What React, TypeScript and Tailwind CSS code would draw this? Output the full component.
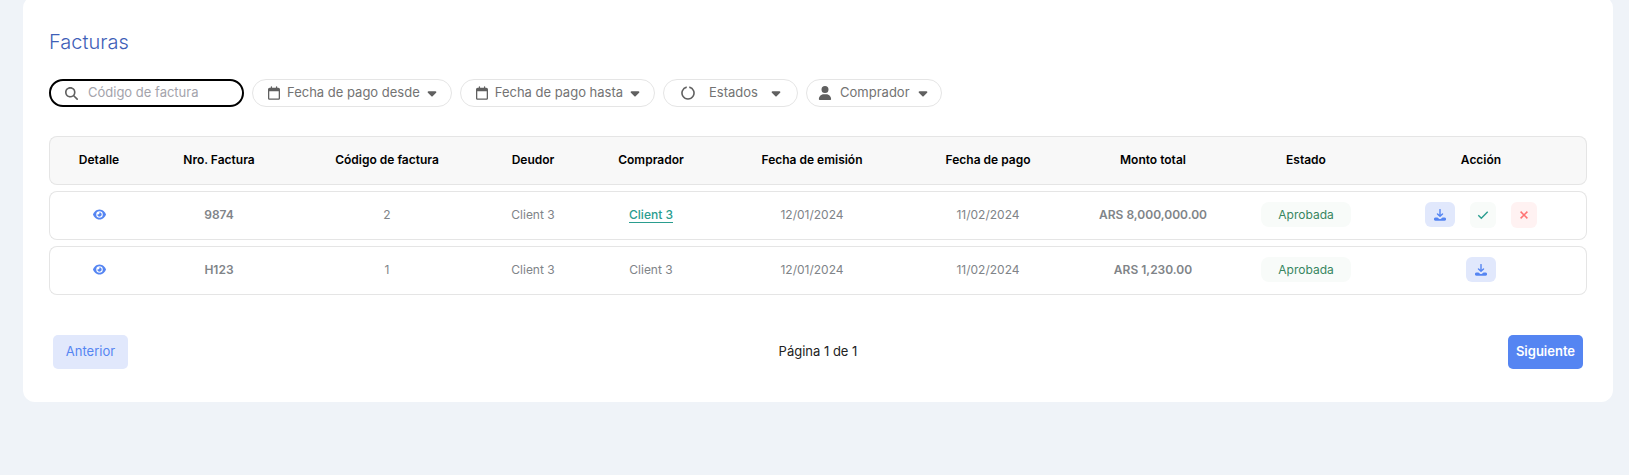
import { useState } from "react";
import { FaCaretDown, FaEye, FaMagnifyingGlass, FaRegCalendar, FaUser } from "react-icons/fa6";

type Invoice = {
  number: string;
  code: number;
  debtor: string;
  buyer: string;
  buyerIsLink?: boolean;
  issueDate: string;
  paymentDate: string;
  amount: string;
  status: string;
  canResolve?: boolean;
};

const INVOICES: Invoice[] = [
  {
    number: "9874",
    code: 2,
    debtor: "Client 3",
    buyer: "Client 3",
    buyerIsLink: true,
    issueDate: "12/01/2024",
    paymentDate: "11/02/2024",
    amount: "ARS 8,000,000.00",
    status: "Aprobada",
    canResolve: true,
  },
  {
    number: "H123",
    code: 1,
    debtor: "Client 3",
    buyer: "Client 3",
    issueDate: "12/01/2024",
    paymentDate: "11/02/2024",
    amount: "ARS 1,230.00",
    status: "Aprobada",
  },
];

const COLUMNS = [
  { label: "Detalle", width: "w-[99px]" },
  { label: "Nro. Factura", width: "w-[142px]" },
  { label: "Código de factura", width: "w-[194px]" },
  { label: "Deudor", width: "w-[98px]" },
  { label: "Comprador", width: "w-[138px]" },
  { label: "Fecha de emisión", width: "w-[184px]" },
  { label: "Fecha de pago", width: "w-[168px]" },
  { label: "Monto total", width: "w-[162px]" },
  { label: "Estado", width: "w-[144px]" },
  { label: "Acción", width: "w-[209px]" },
];

const PILL =
  "flex h-7 items-center rounded-full border border-[#e5e5e5] bg-white text-[13px] text-[#737373]";

const CELL =
  "border-y border-[#e5e5e5] p-0 pb-0.5 first:rounded-l-lg first:border-l last:rounded-r-lg last:border-r last:pr-0.5";

function DownloadIcon() {
  return (
    <svg viewBox="0 0 12 12" className="h-3 w-3" fill="none" stroke="currentColor" aria-hidden="true">
      <path d="M6 0.6v6.4M3.5 4.9 6 7.3l2.5-2.4" strokeWidth="1.4" strokeLinecap="round" strokeLinejoin="round" />
      <path
        d="M1.6 8.4h1.8l1.3 1a2 2 0 0 0 2.6 0l1.3-1h1.8a1.6 1.6 0 0 1 0 3.4H1.6a1.6 1.6 0 0 1 0-3.4z"
        fill="currentColor"
        stroke="none"
      />
    </svg>
  );
}

function CheckIcon() {
  return (
    <svg viewBox="0 0 12 12" className="h-3 w-3" fill="none" stroke="currentColor" aria-hidden="true">
      <path d="M1.3 6.3 4.3 9.2 10.7 2.8" strokeWidth="1.4" />
    </svg>
  );
}

function CrossIcon() {
  return (
    <svg viewBox="0 0 12 12" className="h-3 w-3" fill="none" stroke="currentColor" aria-hidden="true">
      <path d="M2.6 2.6l6.8 6.8M9.4 2.6 2.6 9.4" strokeWidth="1.5" />
    </svg>
  );
}

function StatusIcon() {
  return (
    <svg
      viewBox="0 0 14 14"
      className="mr-3.5 h-3.5 w-3.5 text-[#606060]"
      fill="none"
      stroke="currentColor"
      aria-hidden="true"
    >
      <path d="M5.7 1.1a6 6 0 1 0 2.6 0" strokeWidth="1.6" />
    </svg>
  );
}

function DateFilter({ label }: { label: string }) {
  return (
    <button type="button" aria-haspopup="dialog" className={`${PILL} pr-3 pl-[15px]`}>
      <FaRegCalendar className="mr-[7px] h-3.5 w-3 text-[#606060]" />
      {label}
      <FaCaretDown className="ml-[5px] h-3.5 w-3.5 text-[#606060]" />
    </button>
  );
}

function Filters() {
  const [code, setCode] = useState("");

  return (
    <div className="flex flex-wrap gap-2">
      <label className="flex h-7 w-[195px] items-center rounded-full border-2 border-black bg-white pl-3.5">
        <FaMagnifyingGlass className="mr-2.5 h-[13px] w-[13px] shrink-0 text-[#606060]" />
        <input
          type="text"
          aria-label="Código de factura"
          placeholder="Código de factura"
          value={code}
          onChange={(e) => setCode(e.target.value)}
          className="min-w-0 flex-1 bg-transparent text-[13px] text-[#737373] outline-none placeholder:text-[#a3a3ab]"
        />
      </label>
      <DateFilter label="Fecha de pago desde" />
      <DateFilter label="Fecha de pago hasta" />
      <label className={`${PILL} pr-3.5 pl-[17px]`}>
        <StatusIcon />
        <select aria-label="Estados" className="appearance-none bg-transparent outline-none">
          <option>Estados</option>
        </select>
        <FaCaretDown className="ml-[11px] h-3.5 w-3.5 text-[#606060]" />
      </label>
      <label className={`${PILL} px-[11px]`}>
        <FaUser className="mr-2 h-3.5 w-3.5 text-[#606060]" />
        <select aria-label="Comprador" className="appearance-none bg-transparent outline-none">
          <option>Comprador</option>
        </select>
        <FaCaretDown className="ml-1.5 h-3.5 w-3.5 text-[#606060]" />
      </label>
    </div>
  );
}

function InvoiceRow({ invoice }: { invoice: Invoice }) {
  return (
    <tr className="h-[49px]">
      <td className={CELL}>
        <button type="button" aria-label="Ver detalle" className="mx-auto block text-[#5585f2]">
          <FaEye className="h-[13px] w-[13px]" />
        </button>
      </td>
      <td className={`${CELL} font-semibold`}>{invoice.number}</td>
      <td className={CELL}>{invoice.code}</td>
      <td className={CELL}>{invoice.debtor}</td>
      <td className={CELL}>
        {invoice.buyerIsLink ? (
          <a href="#comprador" className="border-b border-[#2a9d8f] font-medium text-[#2a9d8f]">
            {invoice.buyer}
          </a>
        ) : (
          invoice.buyer
        )}
      </td>
      <td className={CELL}>{invoice.issueDate}</td>
      <td className={CELL}>{invoice.paymentDate}</td>
      <td className={`${CELL} font-semibold`}>{invoice.amount}</td>
      <td className={CELL}>
        <span className="mx-auto flex h-[25px] w-[90px] items-center justify-center rounded-lg bg-[#f8fbf9] text-[#37865f]">
          {invoice.status}
        </span>
      </td>
      <td className={CELL}>
        <div className="flex items-center justify-center gap-[15px]">
          <button
            type="button"
            aria-label="Descargar"
            className="flex h-[25px] w-[30px] items-center justify-center rounded-md bg-[#e1e8fc] text-[#5585f2]"
          >
            <DownloadIcon />
          </button>
          {invoice.canResolve && (
            <>
              <button
                type="button"
                aria-label="Aprobar"
                className="flex h-[26px] w-[26px] items-center justify-center rounded-md bg-[#f8fbf9] text-[#2a9d8f]"
              >
                <CheckIcon />
              </button>
              <button
                type="button"
                aria-label="Rechazar"
                className="flex h-[26px] w-[26px] items-center justify-center rounded-md bg-[#fff2f2] text-[#ff7373]"
              >
                <CrossIcon />
              </button>
            </>
          )}
        </div>
      </td>
    </tr>
  );
}

export default function App() {
  return (
    <div className="flow-root min-h-screen bg-[#eff3f8] pr-4 pl-[23px] font-['Inter',sans-serif]">
      <main className="-mt-1 rounded-xl bg-white px-[26px] pt-8 pb-[33px]">
        <h1 className="mb-[23px] text-xl font-light text-[#3f5fb8]">Facturas</h1>
        <Filters />

        <table className="mt-[23px] w-full table-fixed border-separate border-spacing-x-0 border-spacing-y-[6px] text-center text-xs text-[#808488]">
          <thead>
            <tr className="h-[49px]">
              {COLUMNS.map((column) => (
                <th
                  key={column.label}
                  className={`${CELL} ${column.width} bg-[#f8f8f8] font-semibold text-black`}
                >
                  {column.label}
                </th>
              ))}
            </tr>
          </thead>
          <tbody>
            {INVOICES.map((invoice) => (
              <InvoiceRow key={invoice.number} invoice={invoice} />
            ))}
          </tbody>
        </table>

        <nav
          aria-label="Paginación"
          className="mt-[34px] flex items-center justify-between px-1 text-[13px] text-[#222222]"
        >
          <button type="button" className="h-[34px] w-[75px] rounded-[5px] bg-[#e1e8fc] text-[#5585f2]">
            Anterior
          </button>
          <span>Página 1 de 1</span>
          <button
            type="button"
            className="h-[34px] w-[75px] rounded-[5px] bg-[#5585f2] font-semibold text-white"
          >
            Siguiente
          </button>
        </nav>
      </main>
    </div>
  );
}
